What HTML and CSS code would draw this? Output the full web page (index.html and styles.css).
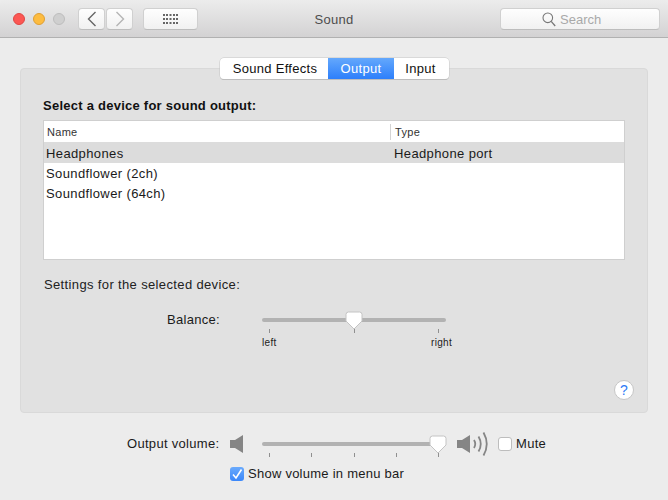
FILE: index.html
```html
<!DOCTYPE html>
<html lang="en">
<head>
<meta charset="utf-8">
<title>Sound</title>
<link rel="stylesheet" href="styles.css">
</head>
<body>
<div class="window">
  <header class="titlebar">
    <div class="lights">
      <span class="light red"></span>
      <span class="light yellow"></span>
      <span class="light grey"></span>
    </div>
    <div class="nav">
      <span class="tool nav-btn">
        <svg width="10" height="16" viewBox="0 0 10 16"><path d="M8.5 1 L1.5 8 L8.5 15" fill="none" stroke="#666" stroke-width="1.4"/></svg>
      </span>
      <span class="tool nav-btn">
        <svg width="10" height="16" viewBox="0 0 10 16"><path d="M1.5 1 L8.5 8 L1.5 15" fill="none" stroke="#b4b4b4" stroke-width="1.4"/></svg>
      </span>
    </div>
    <span class="tool grid-btn">
      <svg width="15" height="11" viewBox="0 0 15 11" fill="#666">
        <rect x="0" y="0" width="2" height="2"/><rect x="3" y="0" width="2" height="2"/><rect x="6.5" y="0" width="2" height="2"/><rect x="10" y="0" width="2" height="2"/><rect x="13" y="0" width="2" height="2"/>
        <rect x="0" y="4" width="2" height="2"/><rect x="3" y="4" width="2" height="2"/><rect x="6.5" y="4" width="2" height="2"/><rect x="10" y="4" width="2" height="2"/><rect x="13" y="4" width="2" height="2"/>
        <rect x="0" y="8" width="2" height="2"/><rect x="3" y="8" width="2" height="2"/><rect x="6.5" y="8" width="2" height="2"/><rect x="10" y="8" width="2" height="2"/><rect x="13" y="8" width="2" height="2"/>
      </svg>
    </span>
    <h1 class="title">Sound</h1>
    <div class="tool search">
      <svg width="14" height="15" viewBox="0 0 14 15"><circle cx="5.8" cy="5.8" r="4.8" fill="none" stroke="#777" stroke-width="1.1"/><path d="M9.2 9.4 L13.2 14" stroke="#777" stroke-width="1.3"/></svg>
      <span>Search</span>
    </div>
  </header>

  <main class="content">
    <nav class="tabs">
      <span class="tab tab-first">Sound Effects</span>
      <span class="tab tab-active">Output</span>
      <span class="tab tab-last">Input</span>
    </nav>
    <section class="panel">
      <h2 class="heading">Select a device for sound output:</h2>
      <div class="table">
        <div class="thead">
          <span class="col-name">Name</span>
          <span class="col-type">Type</span>
        </div>
        <div class="row selected"><span class="col-name">Headphones</span><span class="col-type">Headphone port</span></div>
        <div class="row"><span class="col-name">Soundflower (2ch)</span></div>
        <div class="row"><span class="col-name">Soundflower (64ch)</span></div>
      </div>
      <p class="settings">Settings for the selected device:</p>
      <div class="balance">
        <span class="balance-label">Balance:</span>
        <div class="slider">
          <div class="track"></div>
          <svg class="thumb thumb-balance" width="18" height="20" viewBox="0 0 18 20"><path d="M3.5 1 H14.5 Q17 1 17 3.5 V10 L9 18 L1 10 V3.5 Q1 1 3.5 1 Z" fill="#fff" stroke="#c4c4c4"/></svg>
          <div class="ticks ticks-three"><i></i><i></i><i></i></div>
          <div class="scale"><span>left</span><span>right</span></div>
        </div>
      </div>
      <div class="help-row"><span class="help">?</span></div>
    </section>

    <section class="volume">
      <div class="volume-row">
        <span class="volume-label">Output volume:</span>
        <svg class="spk-low" width="14" height="20" viewBox="0 0 14 20"><path d="M0 6 H5 L13 1 V19 L5 14 H0 Z" fill="#858585"/></svg>
        <div class="slider vol-slider">
          <div class="track"></div>
          <svg class="thumb thumb-volume" width="18" height="20" viewBox="0 0 18 20"><path d="M3.5 1 H14.5 Q17 1 17 3.5 V10 L9 18 L1 10 V3.5 Q1 1 3.5 1 Z" fill="#fff" stroke="#c4c4c4"/></svg>
          <div class="ticks"><i></i><i></i><i></i><i></i><i></i></div>
        </div>
        <svg class="spk-high" width="32" height="26" viewBox="0 0 32 26">
          <path d="M0 9 H5 L13 4 V22 L5 17 H0 Z" fill="#858585"/>
          <g fill="none" stroke="#858585" stroke-width="1.8">
            <path d="M17 9 Q19.5 13 17 17"/>
            <path d="M21.5 5.5 Q26 13 21.5 20.5"/>
            <path d="M26.5 1.5 Q33 13 26.5 24.5"/>
          </g>
        </svg>
        <label class="check-label mute"><span class="check"></span>Mute</label>
      </div>
      <label class="check-label menu-bar">
        <span class="check checked">
          <svg width="12" height="12" viewBox="0 0 12 12"><path d="M2 6.5 L5 10 L10.5 1.5" fill="none" stroke="#fff" stroke-width="1.6"/></svg>
        </span>Show volume in menu bar
      </label>
    </section>
  </main>
</div>
</body>
</html>
```

FILE: styles.css
```css
* { box-sizing: border-box; }
html, body { margin: 0; height: 100%; }
body {
  background: #ececec;
  font-family: "Liberation Sans", Arial, sans-serif;
  font-size: 13px;
  letter-spacing: 0.3px;
  color: #1a1a1a;
  overflow: hidden;
}
.window { width: 668px; height: 500px; }

.titlebar {
  height: 38px;
  display: flex;
  align-items: flex-start;
  padding-top: 8px;
  background: linear-gradient(#ececec, #d3d2d3);
  border-bottom: 1px solid #b1b1b1;
  border-top-left-radius: 5px;
  border-top-right-radius: 5px;
}
.lights { display: flex; gap: 8px; margin: 5px 0 0 13px; }
.light { width: 12px; height: 12px; border-radius: 50%; }
.red { background: #fc5753; border: 1px solid #df4744; }
.yellow { background: #fdbc40; border: 1px solid #de9f34; }
.grey { background: #cfcfcf; border: 1px solid #bdbdbd; }

.tool {
  background: linear-gradient(#fefefe, #f1f1f1);
  border: 1px solid #d0d0d0;
  border-bottom-color: #bdbdbd;
  border-radius: 4px;
  height: 22px;
  display: flex;
  align-items: center;
  justify-content: center;
}
.nav { display: flex; gap: 1px; margin-left: 13px; }
.nav-btn { width: 27px; }
.grid-btn { width: 55px; margin-left: 10px; }
.title {
  width: 272px;
  margin: 4px 30px 0 0;
  text-align: center;
  font-size: 13px;
  font-weight: normal;
  color: #4d4d4d;
}
.search { width: 160px; gap: 4px; color: #a9a9a9; justify-content: flex-start; padding-left: 41px; letter-spacing: 0; }

.content { display: flex; flex-direction: column; align-items: center; padding-top: 20px; }
.tabs {
  display: flex;
  position: relative;
  z-index: 1;
  height: 21px;
  background: #fff;
  border-radius: 4px;
  box-shadow: 0 0 0 0.5px #c6c6c6, 0 1px 0 #b5b5b5;
  width: 229px;
  margin-left: 1px;
}
.tab { display: flex; align-items: center; justify-content: center; color: #111; }
.tab-first { width: 108px; padding-left: 2px; border-radius: 4px 0 0 4px; }
.tab-active { width: 66px; background: linear-gradient(#64a8fc, #2d7ffb); color: #fff; }
.tab-last { width: 55px; padding-right: 2px; border-radius: 0 4px 4px 0; }

.panel {
  width: 628px;
  height: 345px;
  margin-top: -11px;
  padding: 28px 23px 0 22px;
  background: #e1e1e1;
  border: 1px solid #d9d9d9;
  border-radius: 4px;
}
.heading { margin: 0; font-size: 13px; font-weight: bold; line-height: 17px; letter-spacing: 0.25px; color: #111; }
.table {
  margin-top: 6px;
  width: 582px;
  height: 140px;
  background: #fff;
  border: 1px solid #cfcfcf;
  font-size: 13px;
}
.thead, .row { display: flex; align-items: center; }
.thead { height: 21px; font-size: 11px; color: #333; }
.thead .col-name { width: 346px; padding-left: 3px; }
.thead .col-type { border-left: 1px solid #d4d4d4; padding-left: 4px; }
.row { height: 20px; padding-top: 2px; letter-spacing: 0.38px; }
.selected { height: 21px; background: #dcdcdc; padding-top: 2px; }
.col-name { width: 347px; padding-left: 2px; line-height: 16px; }
.col-type { padding-left: 3px; height: 16px; line-height: 16px; }
.settings { margin: 17px 0 0 1px; line-height: 16px; letter-spacing: 0.36px; color: #222; }

.balance { display: flex; align-items: flex-start; margin-top: 20px; }
.balance-label { width: 177px; text-align: right; line-height: 16px; margin-top: -1px; }
.slider { position: relative; width: 184px; margin-left: 42px; padding-top: 5px; }
.track { height: 4px; background: #b2b2b2; border-radius: 2px; }
.thumb { position: absolute; top: -2px; }
.thumb-balance { left: 83px; }
.thumb-volume { left: 167px; }
.ticks { display: flex; justify-content: space-between; padding: 0 7px; margin-top: 7px; }
.ticks i { width: 1px; height: 4px; background: #8f8f8f; }
.scale { display: flex; justify-content: space-between; font-size: 10px; line-height: 12px; margin-top: 4px; padding-left: 0; margin-right: -6px; color: #222; }
.help-row { display: flex; justify-content: flex-end; margin-top: 31px; margin-right: -10px; }
.help {
  width: 20px;
  height: 20px;
  border-radius: 50%;
  background: #fff;
  border: 1px solid #c6c6c6;
  color: #2f7cf6;
  font-size: 14px;
  text-align: center;
  line-height: 18px;
  letter-spacing: 0;
}

.volume { width: 100%; padding-top: 23px; }
.volume-row { display: flex; align-items: flex-start; height: 30px; }
.volume-label { margin-left: 127px; width: 103px; line-height: 16px; }
.spk-low { margin-top: -2px; }
.vol-slider { margin-left: 18px; padding-top: 6px; }
.vol-slider .thumb { top: -1px; }
.spk-high { margin: -5px 0 0 11px; }
.check-label { display: flex; align-items: center; line-height: 16px; color: #1a1a1a; }
.mute { margin-left: 9px; }
.check {
  width: 14px;
  height: 14px;
  background: #fff;
  border: 1px solid #bdbdbd;
  border-radius: 3px;
  margin-right: 4px;
  display: flex;
  align-items: center;
  justify-content: center;
}
.checked { background: linear-gradient(#6aaafc, #3b87fa); border: none; }
.menu-bar { margin-left: 230px; letter-spacing: 0.25px; }
```
